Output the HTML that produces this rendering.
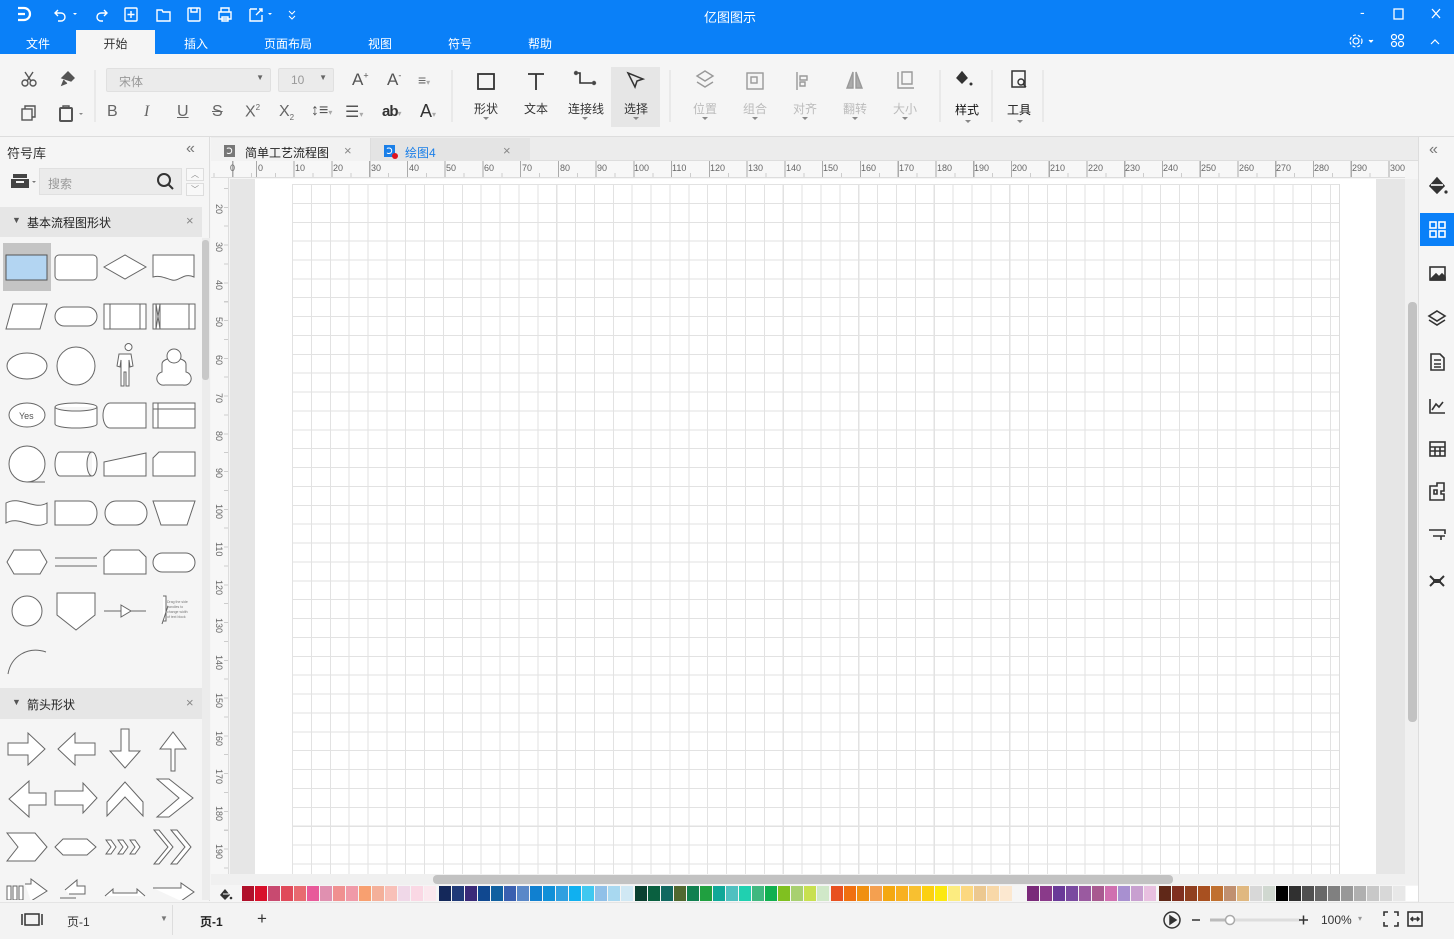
<!DOCTYPE html>
<html><head><meta charset="utf-8"><style>
*{box-sizing:border-box;margin:0;padding:0}
body{width:1454px;height:939px;overflow:hidden;position:relative;background:#f5f5f5;font-family:"Liberation Sans","Noto Sans CJK SC",sans-serif;font-size:12px;color:#333}
.a{position:absolute}
.tb{color:#fff}
.menu span{position:absolute;top:35px;color:#fff;font-size:12px}
.ti{position:absolute;text-align:center;font-size:12px;color:#333}
.dis{color:#bbb}
.rl{position:absolute;font-size:9px;color:#666}
.rv{position:absolute;font-size:9px;color:#666;transform:rotate(90deg);transform-origin:left top}
.sw{position:absolute;top:886px;width:12px;height:15px}
.ri{position:absolute;left:1420px;width:34px;height:33px}
</style></head><body>
<!-- title bar -->
<div class="a" style="left:0;top:0;width:1454px;height:54px;background:#0a80f8"></div>
<svg class="a" style="left:0;top:0" width="310" height="30" viewBox="0 0 310 30" fill="none" stroke="#fff" stroke-width="1.4">
<path d="M18 8h6a6 6 0 0 1 0 12h-6M18 14h7" stroke-width="2.2"/>
<path d="M58 10l-3 3 3 3M55 13h6a4 4 0 0 1 0 8h-3"/><path d="M73 13l2 2 2-2" fill="#fff" stroke="none"/>
<path d="M104 10l3 3-3 3M107 13h-6a4 4 0 0 0 0 8h2"/>
<rect x="125" y="8" width="12" height="13" rx="1"/><path d="M131 11v7M127.5 14.5h7"/>
<path d="M157 10h5l1 2h7v9h-13z"/>
<rect x="188" y="8" width="12" height="13" rx="1"/><path d="M191 8v4h6V8"/>
<path d="M219 12h12v7h-12zM221 12V8h8v4M222 17h6v4h-6z"/>
<path d="M250 9h7M250 9v12h12v-6M256 15l6-6M259 9h3v3"/><path d="M268 13l2 2 2-2" fill="#fff" stroke="none"/>
<path d="M289 11l3 3 3-3M289 16l3 3 3-3" stroke-width="1"/>
</svg>
<div class="a tb" style="left:704px;top:7px;font-size:13px">亿图图示</div>
<div class="a tb" style="left:1360px;top:4px;font-size:14px">-</div>
<svg class="a" style="left:1390px;top:6px" width="64" height="20" fill="none" stroke="#fff" stroke-width="1.3"><rect x="4" y="3" width="9" height="10"/><path d="M42 3l8 9M50 3l-8 9"/></svg>
<div class="menu"><span style="left:26px">文件</span><span style="left:184px">插入</span><span style="left:264px">页面布局</span><span style="left:368px">视图</span><span style="left:448px">符号</span><span style="left:528px">帮助</span></div>
<div class="a" style="left:76px;top:30px;width:79px;height:24px;background:#f5f5f5;text-align:center;padding-top:5px;color:#333">开始</div>
<svg class="a" style="left:1345px;top:32px" width="109" height="20" fill="none" stroke="#fff" stroke-width="1.2"><circle cx="11" cy="9" r="3"/><circle cx="11" cy="9" r="6" stroke-dasharray="3 2"/><path d="M24 8l2 2 2-2" fill="#fff"/><circle cx="49" cy="5" r="2.5"/><circle cx="56" cy="5" r="2.5"/><circle cx="49" cy="12" r="2.5"/><circle cx="56" cy="12" r="2.5"/><path d="M86 12l4-4 4 4"/></svg>
<!-- toolbar -->
<div class="a" style="left:0;top:136px;width:1454px;height:1px;background:#ddd"></div>
<svg class="a" style="left:0;top:54px" width="1060" height="82" fill="none" stroke="#555" stroke-width="1.4">
<circle cx="25" cy="29" r="3"/><circle cx="33" cy="29" r="3"/><path d="M27 27l6-9M31 27l-6-9"/>
<path d="M62 24l6-6 6 6-3 3zM64 26l-2 5 5-2" fill="#555"/>
<rect x="22" y="55" width="10" height="11"/><path d="M25 55v-3h10v11h-3"/>
<rect x="60" y="54" width="12" height="13" rx="1" stroke-width="2"/><path d="M63 54v-2h6v2"/><path d="M79 59l2 2 2-2" fill="#888" stroke="none"/>
<line x1="95" y1="16" x2="95" y2="68" stroke="#ddd" stroke-width="1"/>
<line x1="452" y1="16" x2="452" y2="68" stroke="#ddd" stroke-width="1"/>
<rect x="478" y="20" width="16" height="15" stroke="#333" stroke-width="1.8"/>
<path d="M528 20h16M536 20v16" stroke="#333" stroke-width="1.8"/>
<path d="M577 19h3v10h12" stroke="#333" stroke-width="1.6"/><circle cx="576" cy="19" r="1.5" fill="#333"/><circle cx="594" cy="29" r="1.5" fill="#333"/>
<rect x="611" y="13" width="49" height="60" fill="#e6e6e6" stroke="none"/>
<path d="M628 19l15 6-6 2-2 6z" stroke="#333" stroke-width="1.5"/>
<line x1="670" y1="16" x2="670" y2="68" stroke="#ddd" stroke-width="1"/>
<g stroke="#999"><path d="M697 22l8-5 8 5-8 5zM697 28l8 5 8-5"/><rect x="747" y="19" width="16" height="16"/><rect x="751" y="23" width="6" height="6"/><path d="M797 18v18M800 22h7v4h-7zM800 28h5v4h-5z"/><path d="M853 18l-6 16h6zM856 18l6 16h-6z" fill="#aaa"/><path d="M898 18v16h16M902 18h10v12h-10z"/></g>
<line x1="940" y1="16" x2="940" y2="68" stroke="#ddd" stroke-width="1"/>
<path d="M962 18l5 6-5 5-5-5z" fill="#333" stroke="#333"/><circle cx="971" cy="30" r="1.5" fill="#333" stroke="none"/>
<line x1="992" y1="16" x2="992" y2="68" stroke="#ddd" stroke-width="1"/>
<rect x="1012" y="17" width="13" height="16" stroke="#333" stroke-width="1.5"/><circle cx="1021" cy="28" r="3" stroke="#333"/><path d="M1023 30l3 3" stroke="#333"/>
<line x1="1043" y1="16" x2="1043" y2="68" stroke="#ddd" stroke-width="1"/>
<g fill="#888" stroke="none"><path d="M483 63l3 3 3-3zM582 63l3 3 3-3zM633 63l3 3 3-3zM702 63l3 3 3-3zM752 63l3 3 3-3zM802 63l3 3 3-3zM852 63l3 3 3-3zM902 63l3 3 3-3zM965 66l3 3 3-3zM1017 66l3 3 3-3z"/></g>
</svg>
<div class="a" style="left:106px;top:68px;width:165px;height:24px;background:#ebebeb;border:1px solid #e0e0e0;border-radius:2px;color:#999;padding:4px 12px">宋体<span style="position:absolute;right:6px;top:4px;font-size:8px;color:#666">▼</span></div>
<div class="a" style="left:278px;top:68px;width:56px;height:24px;background:#ebebeb;border:1px solid #e0e0e0;border-radius:2px;color:#999;padding:4px 12px">10<span style="position:absolute;right:6px;top:4px;font-size:8px;color:#666">▼</span></div>
<div class="a" style="left:352px;top:70px;font-size:17px;color:#555">A<sup style="font-size:9px">+</sup></div>
<div class="a" style="left:387px;top:70px;font-size:17px;color:#555">A<sup style="font-size:9px">-</sup></div>
<div class="a" style="left:418px;top:72px;font-size:14px;color:#666">≡<span style="font-size:8px;color:#aaa">▾</span></div>
<div class="a" style="left:107px;top:103px;font-size:16px;color:#666">B</div>
<div class="a" style="left:144px;top:103px;font-size:16px;color:#666;font-style:italic;font-family:'Liberation Serif'">I</div>
<div class="a" style="left:177px;top:103px;font-size:16px;color:#666;text-decoration:underline">U</div>
<div class="a" style="left:212px;top:103px;font-size:16px;color:#666;text-decoration:line-through">S</div>
<div class="a" style="left:245px;top:103px;font-size:16px;color:#666">X<sup style="font-size:8px">2</sup></div>
<div class="a" style="left:279px;top:103px;font-size:16px;color:#666">X<sub style="font-size:8px">2</sub></div>
<div class="a" style="left:311px;top:102px;font-size:16px;color:#555">↕≡<span style="font-size:8px;color:#aaa">▾</span></div>
<div class="a" style="left:345px;top:102px;font-size:16px;color:#555">☰<span style="font-size:8px;color:#aaa">▾</span></div>
<div class="a" style="left:382px;top:103px;font-size:15px;color:#333;font-weight:bold;letter-spacing:-1px">ab<span style="font-size:8px;color:#aaa;font-weight:normal">▾</span></div>
<div class="a" style="left:420px;top:101px;font-size:18px;color:#333">A<span style="font-size:8px;color:#aaa">▾</span></div>
<div class="ti" style="left:466px;top:100px;width:40px">形状</div>
<div class="ti" style="left:516px;top:100px;width:40px">文本</div>
<div class="ti" style="left:562px;top:100px;width:48px">连接线</div>
<div class="ti" style="left:616px;top:100px;width:40px">选择</div>
<div class="ti dis" style="left:685px;top:100px;width:40px">位置</div>
<div class="ti dis" style="left:735px;top:100px;width:40px">组合</div>
<div class="ti dis" style="left:785px;top:100px;width:40px">对齐</div>
<div class="ti dis" style="left:835px;top:100px;width:40px">翻转</div>
<div class="ti dis" style="left:885px;top:100px;width:40px">大小</div>
<div class="ti" style="left:947px;top:101px;width:40px;color:#111">样式</div>
<div class="ti" style="left:999px;top:101px;width:40px;color:#111">工具</div>
<!-- left panel -->
<div class="a" style="left:0;top:137px;width:210px;height:764px;background:#f5f5f5;border-right:1px solid #ddd"></div>
<div class="a" style="left:7px;top:143px;font-size:13px;color:#333">符号库</div>
<div class="a" style="left:186px;top:140px;font-size:16px;color:#777">«</div>
<svg class="a" style="left:10px;top:172px" width="30" height="20"><rect x="3" y="2" width="14" height="4" fill="#444"/><rect x="1" y="7" width="18" height="9" fill="#444"/><rect x="6" y="9" width="8" height="2" fill="#f5f5f5"/><path d="M22 9l2 2 2-2" fill="#777"/></svg>
<div class="a" style="left:39px;top:168px;width:143px;height:27px;background:#ebebeb;border:1px solid #e0e0e0;color:#999;padding:6px 8px">搜索</div>
<svg class="a" style="left:156px;top:172px" width="20" height="20" fill="none" stroke="#333" stroke-width="2"><circle cx="8" cy="8" r="6"/><path d="M12 12l5 5"/></svg>
<div class="a" style="left:186px;top:168px;width:18px;height:13px;border:1px solid #ddd;background:#f8f8f8;font-size:8px;color:#888;text-align:center">︿</div>
<div class="a" style="left:186px;top:183px;width:18px;height:13px;border:1px solid #ddd;background:#f8f8f8;font-size:8px;color:#888;text-align:center">﹀</div>
<div class="a" style="left:0;top:207px;width:202px;height:30px;background:#e6e6e6"></div>
<div class="a" style="left:12px;top:215px;font-size:9px;color:#555">▼</div>
<div class="a" style="left:27px;top:214px;color:#222">基本流程图形状</div>
<div class="a" style="left:186px;top:213px;color:#888;font-size:13px">×</div>
<div class="a" style="left:0;top:688px;width:202px;height:31px;background:#e6e6e6"></div>
<div class="a" style="left:12px;top:697px;font-size:9px;color:#555">▼</div>
<div class="a" style="left:27px;top:696px;color:#222">箭头形状</div>
<div class="a" style="left:186px;top:695px;color:#888;font-size:13px">×</div>
<div class="a" style="left:202px;top:238px;width:8px;height:662px;background:#ececec"></div>
<div class="a" style="left:202px;top:240px;width:7px;height:140px;background:#c8c8c8;border-radius:3px"></div>
<svg class="a" style="left:0;top:238px" width="202" height="662" viewBox="0 238 202 662" fill="#fff" stroke="#666" stroke-width="1">
<rect x="3" y="243" width="48" height="48" fill="#c4c4c4" stroke="none"/>
<rect x="6" y="255" width="41" height="25" fill="#b3d5f2" stroke="#555"/>
<rect x="55" y="255" width="42" height="25" rx="4"/>
<path d="M104 267l21-12 21 12-21 12z"/>
<path d="M153 255h41v22c-10-5-15 5-22 3s-12-5-19-3z"/>
<path d="M13 304h34l-7 25h-34z"/><rect x="55" y="307" width="42" height="19" rx="9.5"/>
<rect x="104" y="304" width="42" height="25"/><path d="M110 304v25M140 304v25"/>
<rect x="153" y="304" width="42" height="25"/><path d="M156 304v25M160 304v25M189 304v25M156 304l4 25M160 304l-4 25"/>
<ellipse cx="27" cy="366" rx="20" ry="13"/><circle cx="76" cy="366" r="19"/>
<path d="M125 347a3.5 3.5 0 1 1 0 .1M119 354h12l2 12-3 1-1-7v26h-3v-14h-2v14h-3v-26l-1 7-3-1z"/>
<path d="M162 372v-8a12 6 0 0 1 24 0v8a3 3 0 0 1-3 13h-18a3 3 0 0 1-3-13z"/><circle cx="174" cy="356" r="7"/>
<ellipse cx="27" cy="415" rx="18" ry="12"/><text x="19" y="419" font-size="9" fill="#555" stroke="none">Yes</text>
<path d="M55 407a21 4 0 0 1 42 0v17a21 4 0 0 1-42 0zM55 407a21 4 0 0 0 42 0"/>
<path d="M110 403h36v25h-36a7 12.5 0 0 1 0-25z"/>
<rect x="153" y="403" width="42" height="25"/><path d="M153 409h42M158 403v25"/>
<circle cx="27" cy="464" r="18"/><path d="M27 482h18"/>
<path d="M60 452h32a5 12 0 0 1 0 24h-32a5 12 0 0 1 0-24zM92 452a5 12 0 0 0 0 24"/>
<path d="M104 462l42-9v23h-42z"/><path d="M159 452h36v24h-42v-18z"/>
<path d="M6 503c14-8 28 8 41 0v20c-14 8-28-8-41 0z"/><path d="M55 501h33a9 12 0 0 1 0 24h-33z"/>
<path d="M116 501h20a11 12 0 0 1 0 24h-20a11 12 0 0 1 0-24z"/><path d="M153 501h42l-8 24h-26z"/>
<path d="M14 550h26l7 12-7 12h-26l-7-12z"/><path d="M55 558h42M55 566h42"/>
<path d="M111 550h28l7 7v17h-42v-17z"/><rect x="153" y="553" width="42" height="19" rx="9.5"/>
<circle cx="27" cy="611" r="15"/><path d="M57 593h38v22l-19 15-19-15z"/>
<path d="M104 611h17M131 611h15M121 605l10 6-10 6z"/>
<path d="M163 596h3v25h-3M168 606l-6 18"/><text x="167" y="603" font-size="3.5" fill="#777" stroke="none">Drag the side</text><text x="167" y="608" font-size="3.5" fill="#777" stroke="none">handles to</text><text x="167" y="613" font-size="3.5" fill="#777" stroke="none">change width</text><text x="167" y="618" font-size="3.5" fill="#777" stroke="none">of text block</text>
<path d="M8 674c3-18 20-28 38-22" fill="none"/>
<rect x="0" y="679" width="202" height="9" fill="#f5f5f5" stroke="none"/>
<rect x="0" y="719" width="202" height="181" fill="#f5f5f5" stroke="none"/>
<path d="M8 743h20v-10l17 16-17 16v-10h-20z"/>
<path d="M95 743h-20v-10l-17 16 17 16v-10h20z"/>
<path d="M121 729h8v22h11l-15 17-15-17h11z"/>
<path d="M171 771h4v-22h11l-13-17-13 17h11z"/>
<path d="M46 793h-17v-12l-20 18 20 18v-12h17z"/>
<path d="M55 791h28v-8l14 15-14 15v-8h-28z"/>
<path d="M107 816v-14l18-20 18 20v14l-18-19z"/>
<path d="M157 779h12l24 19-24 19h-12l22-19z"/>
<path d="M7 833h28l12 14-12 14h-28l11-14z"/><path d="M63 839h24l9 8-9 8h-24l-8-8z"/>
<path d="M106 840h5l5 7-5 7h-5l5-7zM118 840h5l5 7-5 7h-5l5-7zM130 840h5l5 7-5 7h-5l5-7z"/>
<path d="M154 830l14 17-14 17h5l14-17-14-17zM171 830l14 17-14 17h6l14-17-14-17z"/>
<path d="M7 886h4v14h-4zM13 886h4v14h-4zM19 886h4v14h-4zM25 884h6v-5l16 12-16 10"/>
<path d="M65 890l12-10v6h8v8h-16M60 898h16"/><path d="M105 896l8-7v4h24v-4l8 7"/><path d="M153 888h28v-5l13 9-13 9"/>
</svg>
<!-- tabs -->
<div class="a" style="left:211px;top:137px;width:1207px;height:24px;background:#ececec;border-bottom:1px solid #ddd"></div>
<div class="a" style="left:211px;top:138px;width:160px;height:23px;background:#f2f2f2;border-right:1px solid #ddd"></div>
<div class="a" style="left:224px;top:145px;width:11px;height:12px;background:#777;color:#fff;font-size:9px;text-align:center;line-height:12px">Ↄ</div>
<div class="a" style="left:245px;top:144px;color:#222">简单工艺流程图</div>
<div class="a" style="left:344px;top:143px;color:#888;font-size:13px">×</div>
<div class="a" style="left:371px;top:138px;width:159px;height:23px;background:#e4e4e4"></div>
<div class="a" style="left:384px;top:145px;width:11px;height:12px;background:#1a7fe8;color:#fff;font-size:9px;text-align:center;line-height:12px">Ↄ</div>
<div class="a" style="left:392px;top:153px;width:6px;height:6px;border-radius:3px;background:#e0141e"></div>
<div class="a" style="left:405px;top:144px;color:#1a7fe8">绘图4</div>
<div class="a" style="left:503px;top:143px;color:#888;font-size:13px">×</div>
<!-- rulers -->
<div class="a" style="left:211px;top:161px;width:1194px;height:17px;background:#f7f7f7;border-bottom:1px solid #ddd;background-image:repeating-linear-gradient(90deg,#aaa 0 1px,transparent 1px 37.75px),repeating-linear-gradient(90deg,#ccc 0 1px,transparent 1px 18.875px);background-size:100% 17px,100% 5px;background-position:45px 0,45px 12px;background-repeat:repeat-x"></div>
<div class="a" style="left:211px;top:178px;width:18px;height:696px;background:#f7f7f7;border-right:1px solid #ddd;background-image:repeating-linear-gradient(180deg,#ccc 0 1px,transparent 1px 18.875px);background-size:5px 100%;background-position:13px 10px;background-repeat:repeat-y"></div>
<div class="rl" style="left:230px;top:163px">0</div>
<div class="rl" style="left:258px;top:163px">0</div><div class="rl" style="left:295px;top:163px">10</div><div class="rl" style="left:333px;top:163px">20</div><div class="rl" style="left:371px;top:163px">30</div><div class="rl" style="left:409px;top:163px">40</div><div class="rl" style="left:446px;top:163px">50</div><div class="rl" style="left:484px;top:163px">60</div><div class="rl" style="left:522px;top:163px">70</div><div class="rl" style="left:560px;top:163px">80</div><div class="rl" style="left:597px;top:163px">90</div><div class="rl" style="left:634px;top:163px">100</div><div class="rl" style="left:672px;top:163px">110</div><div class="rl" style="left:710px;top:163px">120</div><div class="rl" style="left:748px;top:163px">130</div><div class="rl" style="left:786px;top:163px">140</div><div class="rl" style="left:823px;top:163px">150</div><div class="rl" style="left:861px;top:163px">160</div><div class="rl" style="left:899px;top:163px">170</div><div class="rl" style="left:937px;top:163px">180</div><div class="rl" style="left:974px;top:163px">190</div><div class="rl" style="left:1012px;top:163px">200</div><div class="rl" style="left:1050px;top:163px">210</div><div class="rl" style="left:1088px;top:163px">220</div><div class="rl" style="left:1125px;top:163px">230</div><div class="rl" style="left:1163px;top:163px">240</div><div class="rl" style="left:1201px;top:163px">250</div><div class="rl" style="left:1239px;top:163px">260</div><div class="rl" style="left:1276px;top:163px">270</div><div class="rl" style="left:1314px;top:163px">280</div><div class="rl" style="left:1352px;top:163px">290</div><div class="rl" style="left:1390px;top:163px">300</div>
<div class="rv" style="left:224px;top:204px">20</div><div class="rv" style="left:224px;top:242px">30</div><div class="rv" style="left:224px;top:280px">40</div><div class="rv" style="left:224px;top:317px">50</div><div class="rv" style="left:224px;top:355px">60</div><div class="rv" style="left:224px;top:393px">70</div><div class="rv" style="left:224px;top:431px">80</div><div class="rv" style="left:224px;top:468px">90</div><div class="rv" style="left:224px;top:504px">100</div><div class="rv" style="left:224px;top:542px">110</div><div class="rv" style="left:224px;top:580px">120</div><div class="rv" style="left:224px;top:618px">130</div><div class="rv" style="left:224px;top:655px">140</div><div class="rv" style="left:224px;top:693px">150</div><div class="rv" style="left:224px;top:731px">160</div><div class="rv" style="left:224px;top:769px">170</div><div class="rv" style="left:224px;top:806px">180</div><div class="rv" style="left:224px;top:844px">190</div>
<!-- canvas -->
<div class="a" style="left:230px;top:179px;width:1175px;height:695px;background:#e6e6e6"></div>
<div class="a" style="left:255px;top:179px;width:1121px;height:695px;background:#fff"></div>
<div class="a" style="left:292px;top:184px;width:1048px;height:690px;border-right:1px solid #ddd;background-image:repeating-linear-gradient(90deg,#e2e2e2 0 1px,transparent 1px 18.875px),repeating-linear-gradient(180deg,#e2e2e2 0 1px,transparent 1px 18.875px)"></div>
<div class="a" style="left:1405px;top:179px;width:13px;height:695px;background:#f0f0f0"></div>
<div class="a" style="left:1408px;top:302px;width:9px;height:420px;background:#c2c2c2;border-radius:4px"></div>
<div class="a" style="left:211px;top:874px;width:1207px;height:11px;background:#f0f0f0"></div>
<div class="a" style="left:433px;top:875px;width:740px;height:9px;background:#c2c2c2;border-radius:4px"></div>
<!-- colors -->
<div class="a" style="left:211px;top:885px;width:1207px;height:17px;background:#f5f5f5"></div>
<svg class="a" style="left:219px;top:887px" width="14" height="14"><path d="M6 2l5 6-5 5-5-5z" fill="#333"/><path d="M4 7h6" stroke="#fff"/><circle cx="12" cy="11" r="1.3" fill="#333"/></svg>
<div class="sw" style="left:242px;background:#b0102a"></div><div class="sw" style="left:255px;background:#d8102a"></div><div class="sw" style="left:268px;background:#c84a70"></div><div class="sw" style="left:281px;background:#e04a5a"></div><div class="sw" style="left:294px;background:#e86a70"></div><div class="sw" style="left:307px;background:#e85a9a"></div><div class="sw" style="left:320px;background:#e090b0"></div><div class="sw" style="left:333px;background:#f09090"></div><div class="sw" style="left:346px;background:#f09aa8"></div><div class="sw" style="left:359px;background:#f8a070"></div><div class="sw" style="left:372px;background:#f4b09a"></div><div class="sw" style="left:385px;background:#f8c0b8"></div><div class="sw" style="left:398px;background:#f0d8e8"></div><div class="sw" style="left:411px;background:#fad8e4"></div><div class="sw" style="left:424px;background:#fbe8ee"></div>
<div class="sw" style="left:439px;background:#14285a"></div><div class="sw" style="left:452px;background:#203a78"></div><div class="sw" style="left:465px;background:#3a2a78"></div><div class="sw" style="left:478px;background:#104890"></div><div class="sw" style="left:491px;background:#1060a0"></div><div class="sw" style="left:504px;background:#3a60b0"></div><div class="sw" style="left:517px;background:#5a88c8"></div><div class="sw" style="left:530px;background:#1080d0"></div><div class="sw" style="left:543px;background:#1090d8"></div><div class="sw" style="left:556px;background:#30a0e0"></div><div class="sw" style="left:569px;background:#10b0f0"></div><div class="sw" style="left:582px;background:#40c8f0"></div><div class="sw" style="left:595px;background:#90c0e8"></div><div class="sw" style="left:608px;background:#a8d8f0"></div><div class="sw" style="left:621px;background:#d0e8f4"></div>
<div class="sw" style="left:635px;background:#0a4030"></div><div class="sw" style="left:648px;background:#0a6040"></div><div class="sw" style="left:661px;background:#106860"></div><div class="sw" style="left:674px;background:#506830"></div><div class="sw" style="left:687px;background:#108050"></div><div class="sw" style="left:700px;background:#20a040"></div><div class="sw" style="left:713px;background:#10a898"></div><div class="sw" style="left:726px;background:#50c0c0"></div><div class="sw" style="left:739px;background:#20d0b0"></div><div class="sw" style="left:752px;background:#40b880"></div><div class="sw" style="left:765px;background:#10b050"></div><div class="sw" style="left:778px;background:#80c020"></div><div class="sw" style="left:791px;background:#a8d070"></div><div class="sw" style="left:804px;background:#c8e050"></div><div class="sw" style="left:817px;background:#d0e8c8"></div>
<div class="sw" style="left:831px;background:#e85020"></div><div class="sw" style="left:844px;background:#f07010"></div><div class="sw" style="left:857px;background:#f09010"></div><div class="sw" style="left:870px;background:#f4a050"></div><div class="sw" style="left:883px;background:#f4a810"></div><div class="sw" style="left:896px;background:#f8b020"></div><div class="sw" style="left:909px;background:#f8c030"></div><div class="sw" style="left:922px;background:#fcd010"></div><div class="sw" style="left:935px;background:#fce810"></div><div class="sw" style="left:948px;background:#fcec80"></div><div class="sw" style="left:961px;background:#fcd880"></div><div class="sw" style="left:974px;background:#ecc890"></div><div class="sw" style="left:987px;background:#f8d8a8"></div><div class="sw" style="left:1000px;background:#fce8d0"></div>
<div class="sw" style="left:1027px;background:#7a2a7a"></div><div class="sw" style="left:1040px;background:#8a3a8a"></div><div class="sw" style="left:1053px;background:#6a3a98"></div><div class="sw" style="left:1066px;background:#7a4aa0"></div><div class="sw" style="left:1079px;background:#9a5aa0"></div><div class="sw" style="left:1092px;background:#a85a90"></div><div class="sw" style="left:1105px;background:#d070b0"></div><div class="sw" style="left:1118px;background:#a890d0"></div><div class="sw" style="left:1131px;background:#c8a0d0"></div><div class="sw" style="left:1144px;background:#e8c0e0"></div>
<div class="sw" style="left:1159px;background:#602818"></div><div class="sw" style="left:1172px;background:#803020"></div><div class="sw" style="left:1185px;background:#904020"></div><div class="sw" style="left:1198px;background:#a85020"></div><div class="sw" style="left:1211px;background:#c07030"></div><div class="sw" style="left:1224px;background:#c09070"></div><div class="sw" style="left:1237px;background:#e0b880"></div><div class="sw" style="left:1250px;background:#d8d8d8"></div><div class="sw" style="left:1263px;background:#d0d8d0"></div>
<div class="sw" style="left:1276px;background:#000"></div><div class="sw" style="left:1289px;background:#303030"></div><div class="sw" style="left:1302px;background:#505050"></div><div class="sw" style="left:1315px;background:#686868"></div><div class="sw" style="left:1328px;background:#808080"></div><div class="sw" style="left:1341px;background:#989898"></div><div class="sw" style="left:1354px;background:#b0b0b0"></div><div class="sw" style="left:1367px;background:#c8c8c8"></div><div class="sw" style="left:1380px;background:#d8d8d8"></div><div class="sw" style="left:1393px;background:#e8e8e8"></div><div class="sw" style="left:1406px;background:#fff"></div>
<!-- status bar -->
<div class="a" style="left:0;top:902px;width:1454px;height:37px;background:#f3f3f3;border-top:1px solid #e4e4e4"></div>
<svg class="a" style="left:20px;top:912px" width="24" height="16" fill="none" stroke="#333" stroke-width="1.5"><rect x="5" y="2" width="14" height="11"/><path d="M2 2v11M22 2v11"/></svg>
<div class="a" style="left:67px;top:913px;color:#333">页-1</div>
<div class="a" style="left:160px;top:914px;font-size:8px;color:#777">▼</div>
<div class="a" style="left:172px;top:905px;width:1px;height:30px;background:#ddd"></div>
<div class="a" style="left:200px;top:913px;color:#222;font-weight:bold">页-1</div>
<div class="a" style="left:257px;top:909px;font-size:17px;color:#333">+</div>
<svg class="a" style="left:1160px;top:908px" width="160" height="24" fill="none" stroke="#333" stroke-width="1.5"><circle cx="12" cy="12" r="8"/><path d="M10 8l6 4-6 4z" fill="#333"/><path d="M32 12h8"/><path d="M50 12h90" stroke="#ddd" stroke-width="3"/><path d="M50 12h20" stroke="#bbb" stroke-width="3"/><circle cx="70" cy="12" r="4.5" fill="#fff" stroke="#aaa"/><path d="M139 12h9M143.5 7.5v9"/></svg>
<div class="a" style="left:1321px;top:913px;color:#333">100%</div>
<div class="a" style="left:1358px;top:914px;font-size:8px;color:#999">▾</div>
<svg class="a" style="left:1382px;top:910px" width="44" height="20" fill="none" stroke="#333" stroke-width="1.6"><path d="M2 6V2h4M12 2h4v4M16 12v4h-4M6 16H2v-4"/><rect x="26" y="2" width="14" height="14"/><path d="M29 9h8M31 7l-2 2 2 2M35 7l2 2-2 2"/></svg>
<!-- right sidebar -->
<div class="a" style="left:1418px;top:137px;width:36px;height:765px;background:#f5f5f5;border-left:1px solid #ddd"></div>
<div class="a" style="left:1429px;top:141px;font-size:16px;color:#777">«</div>
<div class="a" style="left:1420px;top:213px;width:34px;height:33px;background:#0a80f8"></div>
<svg class="a" style="left:1420px;top:170px" width="34" height="430" fill="none" stroke="#333" stroke-width="1.6">
<path d="M17 8l7 8-7 7-7-7z" fill="#333"/><path d="M11 15h12" stroke="#fff"/><circle cx="26" cy="22" r="1.6" fill="#333" stroke="none"/>
<g stroke="#fff"><rect x="10" y="52" width="6" height="6"/><rect x="19" y="52" width="6" height="6"/><rect x="10" y="61" width="6" height="6"/><rect x="19" y="61" width="6" height="6"/></g>
<rect x="10" y="97" width="15" height="13"/><path d="M11 109l5-5 3 3 3-3 3 3v3h-14z" fill="#333"/>
<path d="M17 141l8 5-8 5-8-5zM9 150l8 5 8-5"/>
<path d="M11 184h9l4 4v12h-13z"/><path d="M14 190h7M14 194h7M14 197h7"/>
<path d="M10 229v14h15M12 240l4-6 3 3 4-5"/>
<rect x="10" y="272" width="15" height="14"/><path d="M10 277h15M10 281h15M15 277v9M20 277v9"/>
<path d="M10 316h7v-3h7v8h-3v3h3v6h-14z"/><path d="M14 320h3v4h-3z"/>
<path d="M9 360h16v4M13 366h12M21 366v4"/>
<path d="M10 406l4 4h6l4-4M10 416l4-4h6l4 4M14 410v2M20 410v2" stroke-width="2"/>
</svg>
</body></html>
